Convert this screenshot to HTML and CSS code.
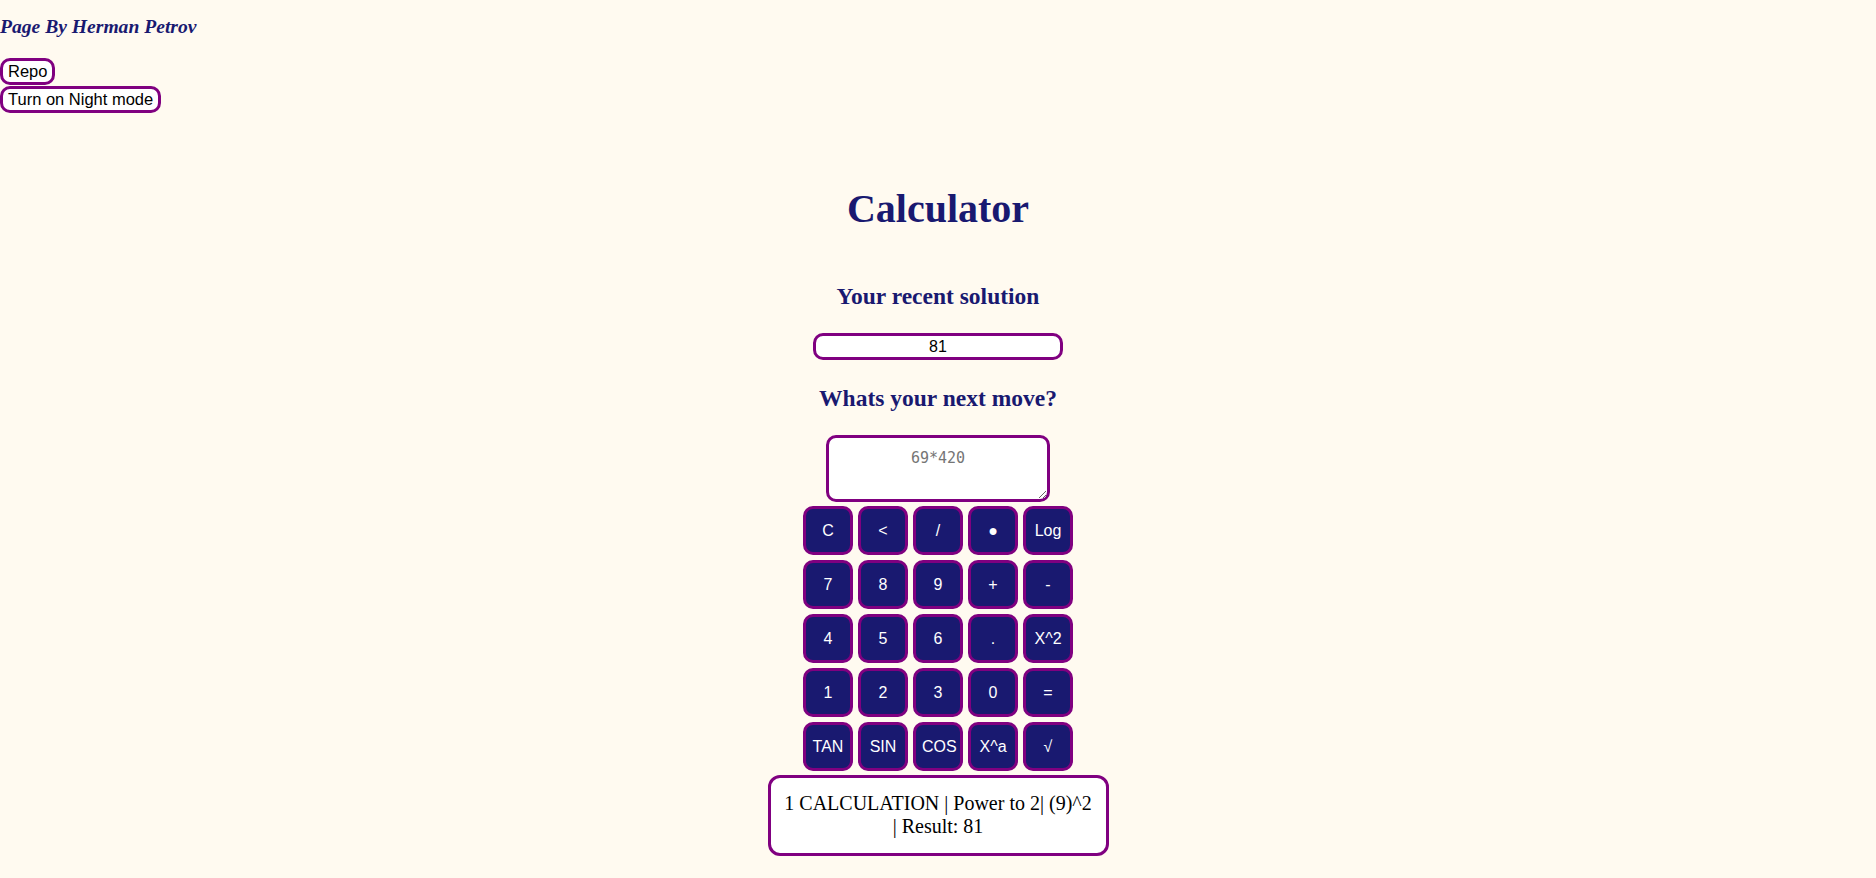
FILE: index.html
```html
<!DOCTYPE html>
<html>
<head>
<meta charset="utf-8">
<title>Calculator</title>
<link rel="stylesheet" href="styles.css">
</head>
<body>
<header class="top">
  <p class="author">Page By Herman Petrov</p>
  <button class="link-btn">Repo</button>
  <button class="link-btn">Turn on Night mode</button>
</header>
<main class="calc">
  <h1 class="title">Calculator</h1>
  <h2 class="subtitle recent">Your recent solution</h2>
  <input class="recent-input" type="text" value="81" readonly>
  <h2 class="subtitle next">Whats your next move?</h2>
  <textarea class="expr" placeholder="69*420"></textarea>
  <div class="keys">
    <button class="key">C</button>
    <button class="key">&lt;</button>
    <button class="key">/</button>
    <button class="key">&#9679;</button>
    <button class="key">Log</button>
    <button class="key">7</button>
    <button class="key">8</button>
    <button class="key">9</button>
    <button class="key">+</button>
    <button class="key">-</button>
    <button class="key">4</button>
    <button class="key">5</button>
    <button class="key">6</button>
    <button class="key">.</button>
    <button class="key">X^2</button>
    <button class="key">1</button>
    <button class="key">2</button>
    <button class="key">3</button>
    <button class="key">0</button>
    <button class="key">=</button>
    <button class="key">TAN</button>
    <button class="key">SIN</button>
    <button class="key">COS</button>
    <button class="key">X^a</button>
    <button class="key">&#8730;</button>
  </div>
  <div class="history">1 CALCULATION | Power to 2| (9)^2 | Result: 81</div>
</main>
</body>
</html>
```
FILE: styles.css
```css
html, body {
  margin: 0;
  padding: 0;
  background: #fffaf0;
  font-family: "Liberation Serif", "Times New Roman", serif;
}

.top {
  display: flex;
  flex-direction: column;
  align-items: flex-start;
}

.author {
  margin: 16px 0 0;
  font-size: 19.6px;
  line-height: 21px;
  font-weight: bold;
  font-style: italic;
  color: #191970;
}

.link-btn {
  display: block;
  margin: 0;
  padding: 1px 5px;
  height: 27px;
  font-family: "Liberation Sans", Arial, sans-serif;
  font-size: 16.5px;
  color: #000;
  background: #fff;
  border: 3px solid #800080;
  border-radius: 10px;
}

.link-btn:first-of-type {
  margin-top: 21px;
}

.link-btn + .link-btn {
  margin-top: 1px;
}

.calc {
  display: flex;
  flex-direction: column;
  align-items: center;
}

.title {
  margin: 73px 0 0;
  font-size: 40px;
  line-height: 46px;
  font-weight: bold;
  color: #191970;
}

.subtitle {
  margin: 0;
  font-size: 23.5px;
  line-height: 26px;
  font-weight: bold;
  color: #191970;
}

.recent {
  margin-top: 51px;
}

.recent-input {
  box-sizing: border-box;
  margin: 24px 0 0;
  width: 250px;
  height: 27px;
  padding: 1px 2px;
  border: 3px solid #800080;
  border-radius: 10px;
  background: #fff;
  font-family: "Liberation Sans", Arial, sans-serif;
  font-size: 16px;
  color: #000;
  text-align: center;
  outline: none;
}

.next {
  margin-top: 25px;
}

.expr {
  box-sizing: border-box;
  margin: 24px 0 0;
  width: 224px;
  height: 67px;
  padding: 11px 4px 2px;
  border: 3px solid #800080;
  border-radius: 10px;
  background: #fff;
  font-family: "DejaVu Sans Mono", "Liberation Mono", monospace;
  font-size: 15px;
  text-align: center;
  display: block;
}

.expr::placeholder {
  color: #757575;
}

.keys {
  margin-top: 4px;
  display: grid;
  grid-template-columns: repeat(5, 50px);
  grid-auto-rows: 49px;
  column-gap: 5px;
  row-gap: 5px;
}

.key {
  box-sizing: border-box;
  margin: 0;
  width: 50px;
  height: 49px;
  padding: 1px 6px;
  border: 3px solid #800080;
  border-radius: 10px;
  background: #191970;
  color: #fff;
  font-family: "Liberation Sans", Arial, sans-serif;
  font-size: 16px;
  white-space: nowrap;
}

.history {
  box-sizing: border-box;
  margin-top: 4px;
  width: 341px;
  padding: 14px 12px 15px;
  border: 3px solid #800080;
  border-radius: 12px;
  background: #fff;
  font-size: 20px;
  line-height: 23px;
  color: #000;
  text-align: center;
}
```
